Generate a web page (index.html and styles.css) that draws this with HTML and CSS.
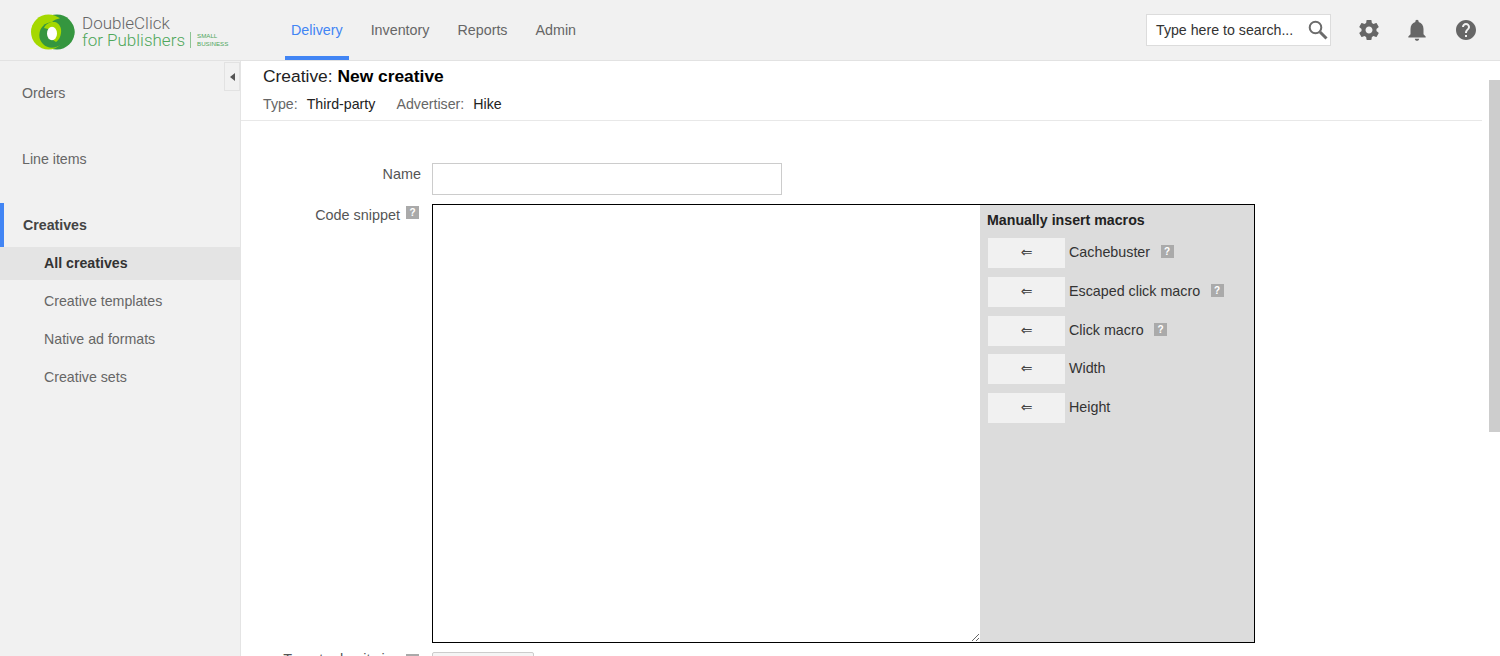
FILE: index.html
```html
<!DOCTYPE html>
<html lang="en">
<head>
  <meta charset="UTF-8">
  <meta name="viewport" content="width=device-width, initial-scale=1.0">
  <title>DoubleClick for Publishers</title>
  <link rel="stylesheet" href="styles.css">
</head>
<body>
  <header class="topbar">
    <div class="logo">
      <svg class="logo-mark" width="44" height="36" viewBox="0 0 44 36">
        <circle cx="26" cy="18" r="17.5" fill="#35963f"/>
        <circle cx="17.5" cy="18" r="17.5" fill="#a5d800"/>
        <circle cx="21" cy="21" r="12.7" fill="#35963f"/>
        <circle cx="30" cy="18" r="13.5" fill="#35963f"/>
        <path d="M13 14C15 9 20 7.5 24 8C28 9 31 14 30 19C29.5 23 28 26 25 28L22 26L21 16Z" fill="#a5d800"/>
        <ellipse cx="21" cy="19.5" rx="5" ry="6.8" fill="#fff"/>
      </svg>
      <div class="logo-words">
        <span class="logo-top">DoubleClick</span>
        <span class="logo-bottom">for Publishers</span>
      </div>
      <div class="logo-small">SMALL<br>BUSINESS</div>
    </div>
    <nav class="tabs">
      <a class="tab active">Delivery</a>
      <a class="tab">Inventory</a>
      <a class="tab">Reports</a>
      <a class="tab">Admin</a>
    </nav>
    <div class="search">
      <span>Type here to search...</span>
      <svg width="22" height="22" viewBox="0 0 22 22" fill="none" stroke="#6b6b6b">
        <circle cx="8.5" cy="8.5" r="5.8" stroke-width="2"/>
        <path d="M13 13l6.5 6.5" stroke-width="3"/>
      </svg>
    </div>
    <div class="top-icons">
      <svg width="24" height="24" viewBox="0 0 24 24" fill="#666"><path d="M19.43 12.98c.04-.32.07-.64.07-.98s-.03-.66-.07-.98l2.11-1.65c.19-.15.24-.42.12-.64l-2-3.46c-.12-.22-.39-.3-.61-.22l-2.49 1c-.52-.4-1.08-.73-1.69-.98l-.38-2.65C14.46 2.18 14.25 2 14 2h-4c-.25 0-.46.18-.49.42l-.38 2.65c-.61.25-1.17.59-1.69.98l-2.49-1c-.23-.09-.49 0-.61.22l-2 3.46c-.13.22-.07.49.12.64l2.11 1.65c-.04.32-.07.65-.07.98s.03.66.07.98l-2.11 1.65c-.19.15-.24.42-.12.64l2 3.46c.12.22.39.3.61.22l2.49-1c.52.4 1.08.73 1.69.98l.38 2.65c.03.24.24.42.49.42h4c.25 0 .46-.18.49-.42l.38-2.65c.61-.25 1.17-.59 1.69-.98l2.49 1c.23.09.49 0 .61-.22l2-3.46c.12-.22.07-.49-.12-.64l-2.11-1.65zM12 15.5c-1.93 0-3.5-1.57-3.5-3.5s1.57-3.5 3.5-3.5 3.5 1.57 3.5 3.5-1.57 3.5-3.5 3.5z"/></svg>
      <svg width="26" height="26" viewBox="0 0 24 24" fill="#666"><path d="M12 22c1.1 0 2-.9 2-2h-4c0 1.1.9 2 2 2zm6-6v-5c0-3.07-1.63-5.64-4.5-6.32V4c0-.83-.67-1.5-1.5-1.5s-1.5.67-1.5 1.5v.68C7.64 5.36 6 7.92 6 11v5l-2 2v1h16v-1l-2-2z"/></svg>
      <svg width="24" height="24" viewBox="0 0 24 24" fill="#666"><path d="M12 2C6.48 2 2 6.48 2 12s4.48 10 10 10 10-4.48 10-10S17.52 2 12 2zm1 17h-2v-2h2v2zm2.07-7.75l-.9.92C13.45 12.9 13 13.5 13 15h-2v-.5c0-1.1.45-2.1 1.17-2.83l1.24-1.26c.37-.36.59-.86.59-1.41 0-1.1-.9-2-2-2s-2 .9-2 2H8c0-2.21 1.79-4 4-4s4 1.79 4 4c0 .88-.36 1.68-.93 2.25z"/></svg>
    </div>
  </header>

  <div class="layout">
    <aside class="sidebar">
      <a class="side-item">Orders</a>
      <a class="side-item">Line items</a>
      <a class="side-item current">Creatives</a>
      <a class="sub-item selected">All creatives</a>
      <a class="sub-item">Creative templates</a>
      <a class="sub-item">Native ad formats</a>
      <a class="sub-item">Creative sets</a>
      <div class="collapse"><span class="collapse-arrow"></span></div>
    </aside>

    <main class="main">
      <div class="page-head">
        <h1 class="page-title">Creative: <b>New creative</b></h1>
        <div class="page-meta">
          <span class="meta-key">Type:</span><span class="meta-val">Third-party</span>
          <span class="meta-key">Advertiser:</span><span class="meta-val">Hike</span>
        </div>
      </div>

      <form class="form">
        <div class="row">
          <label class="row-label">Name</label>
          <input class="name-input" type="text">
        </div>
        <div class="row">
          <label class="row-label">Code snippet <span class="help">?</span></label>
          <div class="snippet">
            <textarea class="snippet-text"></textarea>
            <div class="macros">
              <div class="macros-title">Manually insert macros</div>
              <div class="macro"><button class="macro-btn" type="button">⇐</button><span class="macro-name">Cachebuster</span><span class="help">?</span></div>
              <div class="macro"><button class="macro-btn" type="button">⇐</button><span class="macro-name">Escaped click macro</span><span class="help">?</span></div>
              <div class="macro"><button class="macro-btn" type="button">⇐</button><span class="macro-name">Click macro</span><span class="help">?</span></div>
              <div class="macro"><button class="macro-btn" type="button">⇐</button><span class="macro-name">Width</span></div>
              <div class="macro"><button class="macro-btn" type="button">⇐</button><span class="macro-name">Height</span></div>
            </div>
          </div>
        </div>
        <div class="row">
          <label class="row-label size-label">Target ad unit size <span class="help">?</span></label>
          <button class="size-btn" type="button"></button>
        </div>
      </form>
    </main>
  </div>

  <div class="scroll-thumb"></div>
</body>
</html>
```

FILE: styles.css
```css
/* Basic styling */
html, body {
  height: 100%;
}
body {
  margin: 0;
  overflow: hidden;
  font-family: "Liberation Sans", Arial, sans-serif;
  font-size: 14.2px;
  color: #222;
  background: #fff;
}

/* Top bar */
.topbar {
  display: flex;
  align-items: center;
  height: 60px;
  border-bottom: 1px solid #e2e2e2;
  background: #f1f1f1;
}
.logo {
  display: flex;
  align-items: center;
  width: 285px;
  padding-left: 31px;
  box-sizing: border-box;
  flex: none;
}
.logo-mark {
  flex: none;
  margin-top: 3px;
}
.logo-words {
  display: flex;
  flex-direction: column;
  margin-top: 3px;
  margin-left: 7px;
  font-family: Roboto, "Liberation Sans", sans-serif;
  font-size: 17px;
  font-weight: 300;
  line-height: 17px;
}
.logo-top {
  color: #666;
}
.logo-bottom {
  color: #4fa75b;
}
.logo-small {
  margin: 19px 0 0 5px;
  padding-left: 6px;
  border-left: 1px solid #8cc493;
  font-size: 6.2px;
  line-height: 8px;
  color: #4fa75b;
}
.tabs {
  display: flex;
  align-self: stretch;
  gap: 16px;
}
.tab {
  display: flex;
  align-items: center;
  padding: 0 6px;
  color: #666;
  border-bottom: 4px solid transparent;
  border-top: 4px solid transparent;
  font-size: 14.3px;
}
.tab.active {
  color: #4285f4;
  border-bottom-color: #4285f4;
}
.search {
  display: flex;
  align-items: center;
  justify-content: space-between;
  width: 185px;
  height: 32px;
  box-sizing: border-box;
  margin-left: auto;
  padding: 0 1px 0 9px;
  border: 1px solid #dcdcdc;
  background: #fff;
  color: #333;
}
.top-icons {
  display: flex;
  align-items: center;
  gap: 23px;
  margin: 0 22px 0 26px;
}
.top-icons svg:last-child {
  margin-left: 1px;
}

/* Sidebar */
.layout {
  display: flex;
  height: calc(100% - 61px);
}
.sidebar {
  position: relative;
  flex: none;
  width: 241px;
  padding-top: 10px;
  box-sizing: border-box;
  background: #f1f1f1;
  border-right: 1px solid #e4e4e4;
  color: #666;
}
.side-item {
  display: flex;
  align-items: center;
  height: 44px;
  margin-bottom: 22px;
  padding-left: 22px;
}
.side-item.current {
  margin-bottom: 0;
  padding-left: 19px;
  border-left: 4px solid #4285f4;
  font-weight: bold;
  color: #444;
}
.sub-item {
  display: flex;
  align-items: center;
  height: 33px;
  margin-bottom: 5.2px;
  padding: 0 0 1.5px 44px;
  box-sizing: border-box;
}
.sub-item.selected {
  background: #e4e4e4;
  font-weight: bold;
  color: #333;
}
.collapse {
  position: absolute;
  top: 1px;
  right: 0;
  display: flex;
  align-items: center;
  justify-content: center;
  width: 14px;
  height: 27px;
  border: 1px solid #e2e2e2;
  background: #f1f1f1;
}
.collapse-arrow {
  width: 0;
  height: 0;
  border-style: solid;
  border-width: 4px 5px 4px 0;
  border-color: transparent #555 transparent transparent;
}

/* Main column */
.main {
  flex: 1;
  min-width: 0;
}
.page-head {
  height: 60px;
  margin-right: 18px;
  padding: 4px 0 0 22px;
  box-sizing: border-box;
  border-bottom: 1px solid #e8e8e8;
}
.page-title {
  margin: 0;
  font-size: 17.4px;
  font-weight: normal;
  line-height: 22px;
  color: #222;
}
.page-title b {
  color: #000;
}
.page-meta {
  margin-top: 6px;
  font-size: 14.2px;
  line-height: 22px;
}
.meta-key {
  color: #666;
  margin-right: 9px;
}
.meta-val {
  color: #222;
  margin-right: 18px;
}
.form {
  padding-top: 42px;
}
.row {
  display: flex;
  align-items: flex-start;
  gap: 11px;
  margin-bottom: 9px;
}
.row-label {
  width: 180px;
  flex: none;
  text-align: right;
  color: #555;
  font-size: 14.4px;
  line-height: 22px;
}
.size-label {
  margin-top: -4px;
}
.size-label .help {
  vertical-align: 0;
}
.name-input {
  width: 350px;
  height: 32px;
  padding: 0;
  box-sizing: border-box;
  border: 1px solid #ccc;
  background: #fff;
}
.help {
  display: inline-block;
  width: 13px;
  height: 13px;
  margin: 0 2px;
  vertical-align: 4px;
  background: #aaa;
  color: #fff;
  font-size: 10px;
  font-weight: bold;
  line-height: 13px;
  text-align: center;
}
.snippet {
  display: flex;
  width: 823px;
  height: 439px;
  box-sizing: border-box;
  border: 1px solid #000;
}
.snippet-text {
  display: block;
  flex: none;
  width: 547px;
  height: 100%;
  padding: 0;
  box-sizing: border-box;
  border: none;
  outline: none;
  background: #fff;
}
.macros {
  flex: 1;
  padding: 5px 8px 0;
  background: #dcdcdc;
}
.macros-title {
  height: 20px;
  margin: 0 0 8px -1px;
  font-weight: bold;
  line-height: 20px;
  color: #222;
}
.macro {
  display: flex;
  align-items: center;
  height: 30px;
  margin-bottom: 8.8px;
  color: #333;
}
.macro-name {
  margin-bottom: 2px;
  font-size: 14.3px;
}
.macro .help {
  margin: 0 0 3px 10.5px;
}
.macro-btn {
  flex: none;
  width: 77px;
  height: 30px;
  margin-right: 4px;
  padding: 0 0 2px;
  border: none;
  background: #f1f1f1;
  color: #444;
  font-family: "DejaVu Sans", sans-serif;
  font-size: 14px;
}
.size-btn {
  width: 102px;
  height: 28px;
  padding: 0;
  border: 1px solid #ccc;
  border-radius: 2px;
  background: #f5f5f5;
}

/* Page scrollbar, sits over the content */
.scroll-thumb {
  position: absolute;
  top: 80px;
  right: 0;
  width: 11px;
  height: 352px;
  background: #cdcdcd;
}
```
